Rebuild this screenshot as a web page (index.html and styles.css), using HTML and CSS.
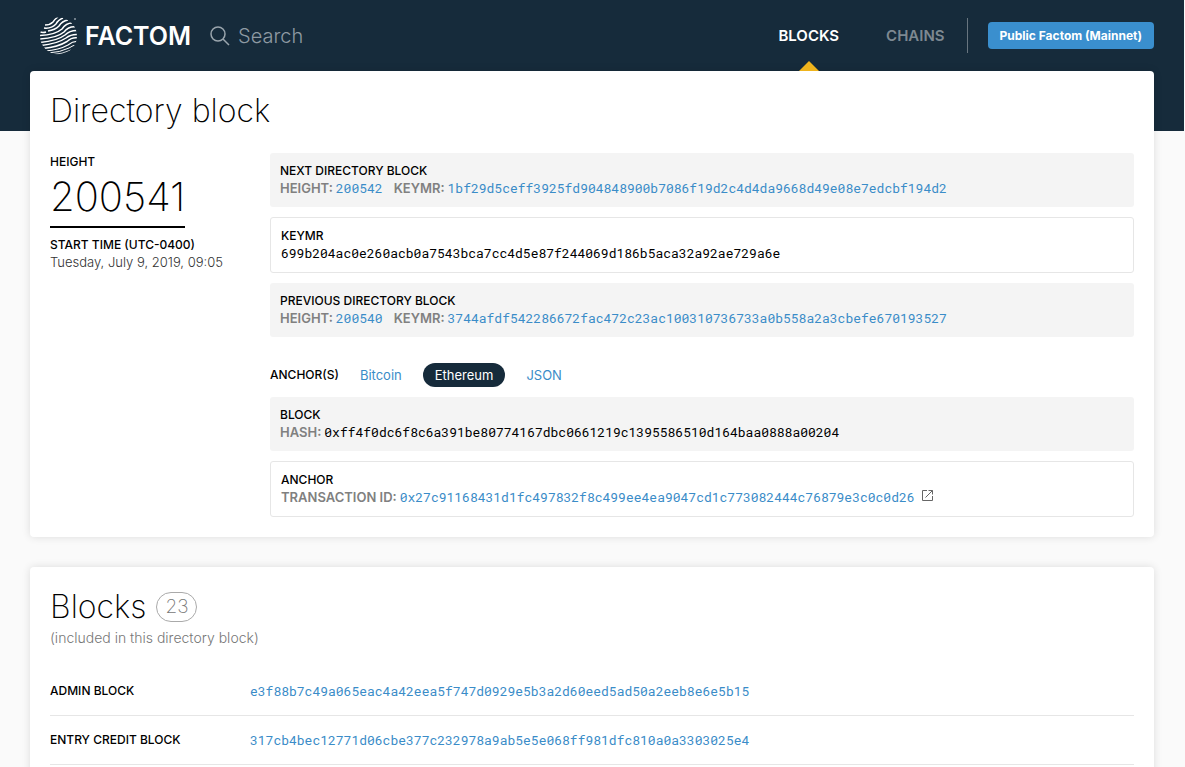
FILE: index.html
```html
<!DOCTYPE html>
<html lang="en">
<head>
  <meta charset="UTF-8">
  <meta name="viewport" content="width=device-width, initial-scale=1.0">
  <title>Factom Explorer</title>
  <link rel="stylesheet" href="styles.css">
</head>
<body>

  <header class="header">
    <div class="topbar">
      <a href="#" class="logo">
        <svg class="logo-mark" width="38" height="38" viewBox="0 0 38 38" aria-hidden="true">
          <clipPath id="globe"><circle cx="18.5" cy="19" r="18.5"/></clipPath>
          <g clip-path="url(#globe)" fill="none" stroke="#fff" stroke-width="1.5">
            <path d="M5 8 Q10 8 13 5 Q15 2 18 0"/>
            <path d="M4 11 Q11 12 16 7 Q18 3 23 1"/>
            <path d="M0 15 Q3 16 6 15 M8 14 Q15 13 19 9 Q22 4 28 3"/>
            <path d="M0 18.500 Q15 18 22 12 Q26 6 32 6"/>
            <path d="M0 22 Q17 21 24 15 Q29 9 36 10"/>
            <path d="M0 25.500 Q17 24 25 18 Q30 13 38 13.500"/>
            <path d="M1 28.500 Q17 27 26 21 Q31 17 38 17.500"/>
            <path d="M3 31.500 Q18 30 27 24.500 Q32 20 38 21"/>
            <path d="M5 34 Q19 33 28 28 Q33 24 38 24.500" stroke-width="1.200"/>
            <path d="M8 36 Q20 35.500 29 31 Q33 28 37 28" stroke-width="1"/>
            <path d="M13 37.500 Q22 37 31 33" stroke-width=".8"/>
          </g>
          <circle cx="35" cy="2" r="1" fill="#8e9aa3"/>
        </svg>
        <span>FACTOM</span>
      </a>

      <form class="search" role="search">
        <label for="search" aria-label="Search">
          <svg width="20" height="20" viewBox="0 0 20 20" fill="none" stroke="#9aa5ad" stroke-width="1.5">
            <circle cx="8" cy="8" r="7"/>
            <path d="M13 13 L19 19"/>
          </svg>
        </label>
        <input type="text" id="search" placeholder="Search">
      </form>

      <nav class="nav">
        <a href="#" class="active">BLOCKS</a>
        <a href="#">CHAINS</a>
      </nav>
      <button type="button" class="network">Public Factom (Mainnet)</button>
    </div>
  </header>

  <main>
    <section class="card directory">
      <h1>Directory block</h1>
      <div class="details">
        <div class="summary">
          <h2>HEIGHT</h2>
          <div class="height">200541</div>
          <h2>START TIME (UTC-0400)</h2>
          <p>Tuesday, July 9, 2019, 09:05</p>
        </div>

        <div class="info">
          <div class="box">
            <h2>NEXT DIRECTORY BLOCK</h2>
            <div class="line">
              <span class="key">HEIGHT:</span><a href="#" class="hash">200542</a>
              <span class="key second">KEYMR:</span><a href="#" class="hash">1bf29d5ceff3925fd904848900b7086f19d2c4d4da9668d49e08e7edcbf194d2</a>
            </div>
          </div>
          <div class="box outline">
            <h2>KEYMR</h2>
            <div class="line"><span class="hash">699b204ac0e260acb0a7543bca7cc4d5e87f244069d186b5aca32a92ae729a6e</span></div>
          </div>
          <div class="box">
            <h2>PREVIOUS DIRECTORY BLOCK</h2>
            <div class="line">
              <span class="key">HEIGHT:</span><a href="#" class="hash">200540</a>
              <span class="key second">KEYMR:</span><a href="#" class="hash">3744afdf542286672fac472c23ac100310736733a0b558a2a3cbefe670193527</a>
            </div>
          </div>

          <div class="anchors">
            <h2>ANCHOR(S)</h2>
            <button type="button">Bitcoin</button>
            <button type="button" class="active">Ethereum</button>
            <button type="button">JSON</button>
          </div>

          <div class="box">
            <h2>BLOCK</h2>
            <div class="line">
              <span class="key">HASH:</span><span class="hash">0xff4f0dc6f8c6a391be80774167dbc0661219c1395586510d164baa0888a00204</span>
            </div>
          </div>
          <div class="box outline">
            <h2>ANCHOR</h2>
            <div class="line">
              <span class="key">TRANSACTION ID:</span><a href="#" class="hash">0x27c91168431d1fc497832f8c499ee4ea9047cd1c773082444c76879e3c0c0d26</a>
              <svg class="external" width="11" height="11" viewBox="0 0 11 11" fill="none" stroke="#666">
                <path d="M5 .5 H.5 V10.500 H10.500 V6 M6.500 .5 H10.500 V4.500 M10.500 .5 L3.500 7.500"/>
              </svg>
            </div>
          </div>
        </div>
      </div>
    </section>

    <section class="card blocks">
      <h1>Blocks <span class="count">23</span></h1>
      <p class="note">(included in this directory block)</p>
      <table>
        <tr>
          <th scope="row">ADMIN BLOCK</th>
          <td><a href="#" class="hash">e3f88b7c49a065eac4a42eea5f747d0929e5b3a2d60eed5ad50a2eeb8e6e5b15</a></td>
        </tr>
        <tr>
          <th scope="row">ENTRY CREDIT BLOCK</th>
          <td><a href="#" class="hash">317cb4bec12771d06cbe377c232978a9ab5e5e068ff981dfc810a0a3303025e4</a></td>
        </tr>
      </table>
    </section>
  </main>

</body>
</html>
```
FILE: styles.css
```css
* {
  box-sizing: border-box;
}

body {
  margin: 0;
  padding-right: 1px;
  background: #fafafa;
  color: #000;
  font-family: Inter, 'Open Sans', sans-serif;
  font-size: 13px;
  line-height: 18px;
}

h1, h2, p {
  margin: 0;
}

h1 {
  font-size: 32px;
  font-weight: 200;
  line-height: 40px;
}

h2 {
  font-size: 12px;
  font-weight: 500;
  line-height: 18px;
}

a {
  color: #3a8cc8;
  text-decoration: none;
}

button {
  border: none;
  font-family: inherit;
  cursor: pointer;
}

.header {
  background: #162b3b;
  padding: 0 30px 60px 40px;
}

.topbar {
  display: flex;
  align-items: center;
  height: 71px;
}

.logo {
  display: flex;
  align-items: center;
  gap: 7px;
  color: #fff;
  font-size: 25px;
  font-weight: 600;
}

.search {
  display: flex;
  align-items: center;
  flex: 1;
  gap: 8px;
  margin-left: 19px;
}

.search label {
  display: flex;
}

.search input {
  width: 100%;
  padding: 0;
  border: none;
  outline: none;
  background: none;
  color: #fff;
  font-family: inherit;
  font-size: 20px;
  font-weight: 300;
}

.search input::placeholder {
  color: #8e9aa3;
}

.nav {
  display: flex;
  align-items: center;
  gap: 47px;
  height: 35px;
  padding-right: 22px;
  border-right: 1px solid #68757f;
}

.nav a {
  position: relative;
  color: #7d8891;
  font-size: 15px;
  font-weight: 600;
}

.nav .active {
  color: #fff;
}

.nav .active::after {
  content: "";
  position: absolute;
  top: 34px;
  left: 50%;
  margin-left: -10px;
  border: 10px solid transparent;
  border-top: none;
  border-bottom-color: #efb41d;
}

.network {
  height: 27px;
  margin-left: 20px;
  padding: 0 12px;
  border-radius: 4px;
  background: #3a8fce;
  color: #fff;
  font-size: 12px;
  font-weight: 700;
}

main {
  display: flex;
  flex-direction: column;
  gap: 30px;
  margin-top: -60px;
  padding: 0 30px 30px;
}

.card {
  padding: 20px;
  border-radius: 4px;
  background: #fff;
  box-shadow: 0 0 8px rgba(0, 0, 0, 0.12);
}

.details {
  display: flex;
  margin-top: 22px;
}

.summary {
  width: 220px;
}

.summary p {
  color: #333;
  font-weight: 300;
  line-height: 16px;
}

.height {
  display: inline-block;
  margin-bottom: 8px;
  padding: 4px 0 7px;
  border-bottom: 2px solid #000;
  font-size: 40px;
  font-weight: 200;
  line-height: 44px;
}

.info {
  flex: 1;
  display: flex;
  flex-direction: column;
  gap: 10px;
}

.box {
  padding: 9px 10px 11px;
  border-radius: 3px;
  background: #f4f4f4;
}

.outline {
  border: 1px solid #e6e6e6;
  background: #fff;
}

.line {
  display: flex;
  align-items: center;
  height: 16px;
}

.key {
  margin-right: 3px;
  color: #808080;
  font-size: 13px;
  font-weight: 600;
}

.second {
  margin-left: 11px;
}

.hash {
  font-family: 'Roboto Mono', 'Liberation Mono', monospace;
  font-size: 13px;
}

.external {
  margin: -4px 0 0 7px;
}

.anchors {
  display: flex;
  align-items: center;
  gap: 9px;
  margin-top: 16px;
}

.anchors button {
  height: 24px;
  padding: 0 12px;
  border-radius: 12px;
  background: none;
  color: #3a8cc8;
  font-size: 13px;
}

.anchors .active {
  background: #162b3b;
  color: #fff;
}

.count {
  padding: 3px 8px;
  border: 1px solid #aaa;
  border-radius: 15px;
  color: #777;
  font-size: 19px;
  line-height: 22px;
}

.blocks h1 {
  display: flex;
  align-items: center;
  gap: 10px;
}

.note {
  margin: 2px 0 20px;
  color: #777;
  font-size: 14px;
  font-weight: 300;
}

table {
  width: 100%;
  border-spacing: 0;
}

th, td {
  height: 49px;
  padding: 0;
  border-bottom: 1px solid #e6e6e6;
  text-align: left;
}

th {
  width: 200px;
  font-size: 12px;
  font-weight: 500;
}
```
